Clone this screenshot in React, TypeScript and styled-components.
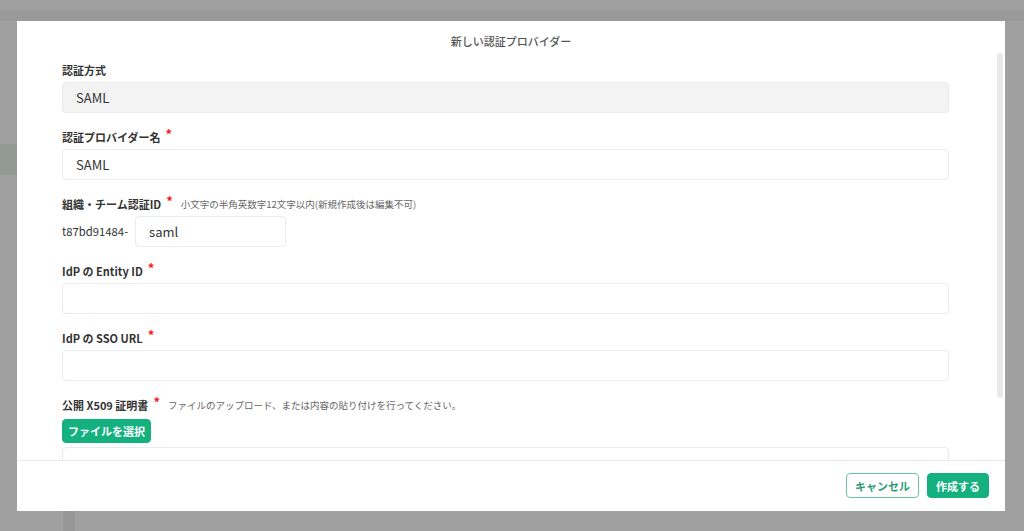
import React from "react";
import styled, { createGlobalStyle } from "styled-components";

const GREEN = "#14b17f";

const GlobalStyle = createGlobalStyle`
  html, body {
    margin: 0;
    padding: 0;
    height: 100%;
    overflow: hidden;
    background: #ffffff;
    font-family: "Noto Sans CJK JP", "Noto Sans", sans-serif;
    color: #333;
  }
  #root {
    height: 100%;
  }
`;

const Page = styled.div`
  height: 100vh;
  display: flex;
  flex-direction: column;
`;

const TopBar = styled.div`
  height: 10px;
  background: #ffffff;
`;

const SubBar = styled.div`
  height: 11px;
  background: #f6f6f6;
`;

const Main = styled.div`
  flex: 1;
  display: flex;
`;

const Sidebar = styled.div`
  width: 63px;
  padding-top: 123px;
  background: #ffffff;
`;

const SideItem = styled.div<{ $active?: boolean }>`
  height: 31px;
  background: ${({ $active }) => ($active ? "#e5f4eb" : "transparent")};
`;

const Rail = styled.div`
  width: 12px;
  background: #f1f1f1;
`;

const Overlay = styled.div`
  position: fixed;
  inset: 0;
  background: rgba(0, 0, 0, 0.373);
  display: flex;
  align-items: center;
  justify-content: center;
`;

const Dialog = styled.div`
  position: relative;
  width: 988px;
  height: 490px;
  margin-left: -2px;
  background: #ffffff;
  display: flex;
  flex-direction: column;
  overflow: hidden;
`;

const DialogHeader = styled.div`
  height: 41px;
  display: flex;
  align-items: center;
  justify-content: center;
  flex-shrink: 0;
`;

const Title = styled.h2`
  margin: 0;
  font-size: 11px;
  font-weight: 500;
  color: #555;
`;

const Body = styled.div`
  flex: 1;
  overflow: hidden;
  padding: 0 56px 0 45px;
  display: flex;
  flex-direction: column;
  gap: 16px;
`;

const ScrollThumb = styled.div`
  position: absolute;
  left: 980px;
  top: 32px;
  width: 6px;
  height: 345px;
  border-radius: 3px;
  background: #e9e9e9;
`;

const Field = styled.div`
  display: flex;
  flex-direction: column;
  flex-shrink: 0;
`;

const Label = styled.div<{ $gap?: number }>`
  display: flex;
  align-items: center;
  height: 16px;
  margin-bottom: ${({ $gap }) => $gap ?? 4}px;
  font-size: 11px;
  font-weight: 700;
  color: #333;
`;

const Required = styled.span`
  color: #f21a1a;
  font-size: 13px;
  margin-left: 5px;
  position: relative;
  top: -3px;
`;

const Hint = styled.span`
  margin-left: 8px;
  font-size: 9.5px;
  font-weight: 400;
  color: #666;
`;

const Input = styled.input<{ $width?: number }>`
  box-sizing: border-box;
  height: 31px;
  width: ${({ $width }) => ($width ? `${$width}px` : "100%")};
  padding: 0 13px;
  border: 1px solid #e8eaef;
  border-radius: 4px;
  background: #ffffff;
  font-family: inherit;
  font-size: 13px;
  color: #333;
  outline: none;

  &:disabled {
    background: #f3f3f4;
    color: #333;
  }
`;

const IdRow = styled.div`
  display: flex;
  align-items: center;
  gap: 7px;
`;

const Prefix = styled.span`
  font-size: 11.3px;
  color: #333;
`;

const Button = styled.button<{ $variant?: "solid" | "outline" }>`
  box-sizing: border-box;
  height: 25px;
  padding: 0 8px;
  border-radius: 4px;
  font-family: inherit;
  font-size: 11px;
  font-weight: 700;
  cursor: pointer;
  border: 1px solid ${({ $variant }) => ($variant === "outline" ? "#6cc4a6" : GREEN)};
  background: ${({ $variant }) => ($variant === "outline" ? "#ffffff" : GREEN)};
  color: ${({ $variant }) => ($variant === "outline" ? "#2f9c78" : "#ffffff")};
`;

const FileButton = styled(Button)`
  align-self: flex-start;
  height: 24px;
  width: 89px;
  padding: 0;
  margin-bottom: 4px;
`;

const TextArea = styled.textarea`
  box-sizing: border-box;
  height: 120px;
  width: 100%;
  border: 1px solid #e8eaef;
  border-radius: 4px;
  resize: none;
  outline: none;
`;

const Footer = styled.div`
  height: 51px;
  flex-shrink: 0;
  border-top: 1px solid #e6e8ec;
  box-sizing: border-box;
  display: flex;
  align-items: center;
  justify-content: flex-end;
  gap: 8px;
  padding-right: 16px;
`;

const App: React.FC = () => {
  return (
    <>
      <GlobalStyle />
      <Page>
        <TopBar />
        <SubBar />
        <Main>
          <Sidebar>
            <SideItem $active />
          </Sidebar>
          <Rail />
        </Main>
      </Page>
      <Overlay>
        <Dialog>
          <DialogHeader>
            <Title>新しい認証プロバイダー</Title>
          </DialogHeader>
          <Body>
            <Field>
              <Label>認証方式</Label>
              <Input value="SAML" disabled readOnly />
            </Field>
            <Field>
              <Label>
                認証プロバイダー名<Required>*</Required>
              </Label>
              <Input defaultValue="SAML" />
            </Field>
            <Field>
              <Label>
                組織・チーム認証ID<Required>*</Required>
                <Hint>小文字の半角英数字12文字以内(新規作成後は編集不可)</Hint>
              </Label>
              <IdRow>
                <Prefix>t87bd91484-</Prefix>
                <Input $width={151} defaultValue="saml" />
              </IdRow>
            </Field>
            <Field>
              <Label>
                IdP の Entity ID<Required>*</Required>
              </Label>
              <Input />
            </Field>
            <Field>
              <Label>
                IdP の SSO URL<Required>*</Required>
              </Label>
              <Input />
            </Field>
            <Field>
              <Label $gap={6}>
                公開 X509 証明書<Required>*</Required>
                <Hint>ファイルのアップロード、または内容の貼り付けを行ってください。</Hint>
              </Label>
              <FileButton type="button">ファイルを選択</FileButton>
              <TextArea />
            </Field>
          </Body>
          <ScrollThumb />
          <Footer>
            <Button $variant="outline" type="button">
              キャンセル
            </Button>
            <Button type="button">作成する</Button>
          </Footer>
        </Dialog>
      </Overlay>
    </>
  );
};

export default App;
